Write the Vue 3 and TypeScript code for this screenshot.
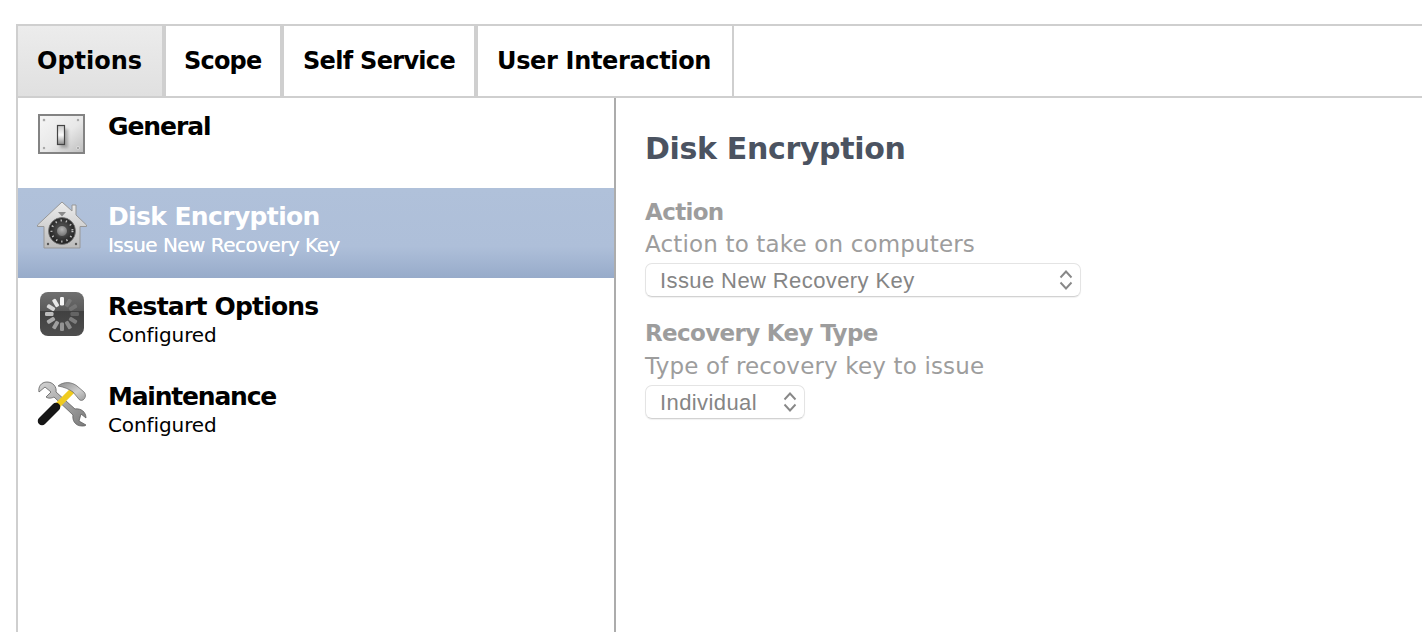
<template>
  <div class="page">
    <div class="panel">
      <!-- tab strip -->
      <nav class="tabs">
        <div
          v-for="tab in tabs"
          :key="tab.name"
          class="tab"
          :class="{ active: tab.name === 'Options' }"
        >
          {{ tab.name }}
        </div>
      </nav>

      <div class="body">
        <!-- payload list -->
        <aside class="sidebar">
          <div
            v-for="item in items"
            :key="item.title"
            class="row"
            :class="{ selected: item.selected }"
          >
            <div class="row-icon">
              <svg v-if="item.icon === 'switch'" class="icon-switch" width="48" height="41" viewBox="0 0 48 41">
                <defs>
                  <linearGradient id="plate" x1="0" y1="0" x2="1" y2="1">
                    <stop offset="0" stop-color="#f6f6f6" />
                    <stop offset="0.55" stop-color="#e8e8e8" />
                    <stop offset="1" stop-color="#bcbcbc" />
                  </linearGradient>
                  <linearGradient id="lever" x1="0" y1="0" x2="0" y2="1">
                    <stop offset="0" stop-color="#c8c8c8" />
                    <stop offset="0.5" stop-color="#fafafa" />
                    <stop offset="1" stop-color="#8c8c8c" />
                  </linearGradient>
                  <filter id="soft" x="-50%" y="-50%" width="200%" height="200%">
                    <feGaussianBlur stdDeviation="1.6" />
                  </filter>
                </defs>
                <rect x="1" y="1" width="45" height="38" fill="url(#plate)" stroke="#838383" stroke-width="2" />
                <rect x="22" y="15" width="8" height="19" fill="#000" opacity="0.25" filter="url(#soft)" />
                <rect x="19.5" y="11.5" width="7" height="19" fill="url(#lever)" stroke="#444" stroke-width="1.2" />
                <g fill="#9a9a9a" stroke="#fff" stroke-width="0.5">
                  <circle cx="6" cy="6" r="1.5" />
                  <circle cx="40" cy="6" r="1.5" />
                  <circle cx="6" cy="34" r="1.5" />
                  <circle cx="40" cy="34" r="1.5" />
                </g>
              </svg>

              <svg v-else-if="item.icon === 'vault'" width="50" height="48" viewBox="0 0 50 48">
                <defs>
                  <linearGradient id="house" x1="0" y1="0" x2="0" y2="1">
                    <stop offset="0" stop-color="#ececec" />
                    <stop offset="1" stop-color="#bcbcbc" />
                  </linearGradient>
                  <radialGradient id="dial" cx="0.5" cy="0.45" r="0.6">
                    <stop offset="0" stop-color="#666" />
                    <stop offset="0.6" stop-color="#333" />
                    <stop offset="1" stop-color="#1c1c1c" />
                  </radialGradient>
                  <radialGradient id="hub" cx="0.5" cy="0.35" r="0.7">
                    <stop offset="0" stop-color="#b4b4b4" />
                    <stop offset="1" stop-color="#6a6a6a" />
                  </radialGradient>
                </defs>
                <path
                  d="M25 1 L35 10 V4 H39 V14 L49.5 24 V25.5 H43 V47 H7 V25.5 H.5 V24 Z"
                  fill="url(#house)"
                  stroke="#979797"
                />
                <path d="M21 11 H29 L25 15.5 Z" fill="#8a8a8a" />
                <circle cx="25" cy="30" r="13.5" fill="url(#dial)" stroke="#777" stroke-width="0.8" />
                <circle cx="25" cy="30" r="10.5" fill="none" stroke="#c4c4c4" stroke-width="2" stroke-dasharray="1.3 4" />
                <circle cx="25" cy="30" r="5.5" fill="url(#hub)" stroke="#3a3a3a" stroke-width="0.8" />
                <circle cx="11" cy="43" r="1.2" fill="#555" />
                <circle cx="39" cy="43" r="1.2" fill="#555" />
              </svg>

              <svg v-else-if="item.icon === 'spinner'" class="icon-spinner" width="44" height="44" viewBox="0 0 44 44">
                <defs>
                  <linearGradient id="tile" x1="0" y1="0" x2="0" y2="1">
                    <stop offset="0" stop-color="#707070" />
                    <stop offset="0.42" stop-color="#5a5a5a" />
                    <stop offset="0.44" stop-color="#414141" />
                    <stop offset="1" stop-color="#4e4e4e" />
                  </linearGradient>
                </defs>
                <rect x="0" y="0" width="44" height="44" rx="8" fill="url(#tile)" />
                <rect
                  v-for="spoke in spokes"
                  :key="spoke.angle"
                  x="20"
                  y="5"
                  width="4"
                  height="8.5"
                  rx="1.2"
                  fill="#fff"
                  :opacity="spoke.opacity"
                  :transform="`rotate(${spoke.angle} 22 22)`"
                />
              </svg>

              <svg v-else width="50" height="48" viewBox="0 0 50 48">
                <defs>
                  <linearGradient id="steel" x1="0" y1="0" x2="1" y2="1">
                    <stop offset="0" stop-color="#d4d4d4" />
                    <stop offset="1" stop-color="#7a7a7a" />
                  </linearGradient>
                  <linearGradient id="head" x1="0" y1="0" x2="1" y2="1">
                    <stop offset="0" stop-color="#8c8c8c" />
                    <stop offset="0.6" stop-color="#cfcfcf" />
                    <stop offset="1" stop-color="#9c9c9c" />
                  </linearGradient>
                </defs>
                <!-- wrench -->
                <path
                  d="M10 1 C4 1 1 6 2 11 L8 6 L14 11 L9 16 C12 18 15 17 17 16 L36 34 C35 39 38 45 45 45 C47 45 48 45 49 44 L42 40 L44 33 L49 37 C49 31 44 27 38 28 L19 11 C20 6 16 1 10 1 Z"
                  fill="url(#steel)"
                  stroke="#5e5e5e"
                  stroke-width="0.8"
                />
                <!-- hammer -->
                <path d="M17 28 L36 9" fill="none" stroke="#f0cb1e" stroke-width="6" />
                <path d="M5 40 L19 26" fill="none" stroke="#161616" stroke-width="8.5" stroke-linecap="round" />
                <path
                  d="M21 5 C27 0 35 1 40 5 L47 11 C49 13 49 17 46 19 C44 20 42 19 41 17 L36 11 C32 8 27 6 21 5 Z"
                  fill="url(#head)"
                  stroke="#6e6e6e"
                  stroke-width="0.8"
                />
              </svg>
            </div>
            <div class="row-text">
              <div class="row-title">{{ item.title }}</div>
              <div v-if="item.sub" class="row-sub">{{ item.sub }}</div>
            </div>
          </div>
        </aside>

        <!-- form -->
        <main class="content">
          <h1 class="heading">Disk Encryption</h1>

          <div class="label">Action</div>
          <div class="hint">Action to take on computers</div>
          <div class="select wide">
            <span>Issue New Recovery Key</span>
            <svg class="updown" width="14" height="22" viewBox="0 0 14 22">
              <path d="M1.5 8.5 L7 2.5 L12.5 8.5 M1.5 13.5 L7 19.5 L12.5 13.5" />
            </svg>
          </div>

          <div class="label second">Recovery Key Type</div>
          <div class="hint">Type of recovery key to issue</div>
          <div class="select narrow">
            <span>Individual</span>
            <svg class="updown" width="14" height="22" viewBox="0 0 14 22">
              <path d="M1.5 8.5 L7 2.5 L12.5 8.5 M1.5 13.5 L7 19.5 L12.5 13.5" />
            </svg>
          </div>
        </main>
      </div>
    </div>
  </div>
</template>

<script setup lang="ts">
interface PayloadItem {
  title: string
  sub?: string
  icon: 'switch' | 'vault' | 'spinner' | 'tools'
  selected?: boolean
}

const tabs = [
  { name: 'Options' },
  { name: 'Scope' },
  { name: 'Self Service' },
  { name: 'User Interaction' }
]

const items: PayloadItem[] = [
  { title: 'General', icon: 'switch' },
  { title: 'Disk Encryption', sub: 'Issue New Recovery Key', icon: 'vault', selected: true },
  { title: 'Restart Options', sub: 'Configured', icon: 'spinner' },
  { title: 'Maintenance', sub: 'Configured', icon: 'tools' }
]

// twelve spokes, brightest at 12 o'clock, fading counter-clockwise
const spokeOpacity = [0.95, 0.14, 0.14, 0.18, 0.3, 0.36, 0.42, 0.48, 0.55, 0.65, 0.75, 0.85]
const spokes = spokeOpacity.map((opacity, i) => ({ angle: i * 30, opacity }))
</script>

<style scoped>
.page {
  height: 632px;
  overflow: hidden;
  padding: 24px 0 0 16px;
  box-sizing: border-box;
  background: #fff;
  font-family: "DejaVu Sans", "Open Sans", sans-serif;
}

.panel {
  height: 608px;
  border-top: 2px solid #cfcfcf;
  border-left: 2px solid #cfcfcf;
  box-sizing: border-box;
}

.tabs {
  display: flex;
  height: 72px;
  box-sizing: border-box;
  border-bottom: 2px solid #cfcfcf;
}

.tab {
  display: flex;
  align-items: center;
  box-sizing: border-box;
  padding-left: 19px;
  font-size: 24px;
  font-weight: 700;
  color: #000;
  white-space: nowrap;
  border-right: 4px solid #cfcfcf;
}

.tab:nth-child(1) { width: 148px; letter-spacing: 0; }
.tab:nth-child(2) { width: 118px; padding-left: 18px; letter-spacing: -0.8px; }
.tab:nth-child(3) { width: 194px; letter-spacing: -0.7px; }
.tab:nth-child(4) { width: 256px; letter-spacing: -0.34px; border-right-width: 2px; }

.tab.active {
  background: linear-gradient(#ececec, #e0e0e0);
}

.body {
  display: flex;
  height: 534px;
}

.sidebar {
  width: 598px;
  flex: none;
  box-sizing: border-box;
  border-right: 2px solid #acacac;
}

.row {
  display: flex;
  height: 90px;
  box-sizing: border-box;
}

.row.selected {
  background: linear-gradient(#b0c1da 0%, #aebfd9 65%, #97abca 100%);
  color: #fff;
}

.row-icon {
  width: 90px;
  flex: none;
  display: flex;
  justify-content: center;
  align-items: flex-start;
  padding-top: 13px;
  box-sizing: border-box;
  padding-right: 2px;
}

.icon-switch {
  margin-top: 3px;
}

.icon-spinner {
  margin-top: 1px;
}

.row-text {
  padding-top: 13px;
  color: #000;
}

.selected .row-text {
  color: #fff;
}

.row-title {
  font-size: 25px;
  font-weight: 700;
  line-height: 32px;
  letter-spacing: -0.8px;
}

.row:nth-child(1) .row-title { letter-spacing: -1.07px; }
.row:nth-child(2) .row-title { letter-spacing: -0.63px; }
.row:nth-child(4) .row-title { letter-spacing: -1.2px; }

.row-sub {
  font-size: 20px;
  line-height: 24px;
  letter-spacing: -0.1px;
}

.selected .row-sub {
  letter-spacing: -0.53px;
  text-shadow: 0 0 0.6px #fff;
}

.content {
  flex: 1;
  padding-left: 29px;
}

.heading {
  margin: 30px 0 0;
  font-size: 30px;
  line-height: 42px;
  font-weight: 700;
  letter-spacing: -0.33px;
  color: #4b5361;
}

.label {
  margin-top: 26px;
  font-size: 23px;
  line-height: 32px;
  font-weight: 700;
  letter-spacing: -0.65px;
  color: #9d9d9d;
}

.label.second {
  margin-top: 20px;
  line-height: 33px;
}

.hint {
  font-size: 23px;
  line-height: 32px;
  letter-spacing: 0.16px;
  color: #9d9d9d;
}

.select {
  display: flex;
  align-items: center;
  justify-content: space-between;
  height: 34px;
  margin-top: 3px;
  box-sizing: border-box;
  padding: 0 7px 0 14px;
  border: 1px solid #e4e4e4;
  border-bottom-color: #d2d2d2;
  border-radius: 7px;
  box-shadow: 0 1px 1px rgba(0, 0, 0, 0.06);
  font-family: "Liberation Sans", Arial, sans-serif;
  font-size: 22px;
  letter-spacing: 0.4px;
  color: #858585;
}

.select span {
  margin-top: 1px;
}

.select.wide {
  width: 436px;
}

.select.narrow {
  width: 160px;
}

.updown {
  fill: none;
  stroke: #888;
  stroke-width: 1.9;
}
</style>
